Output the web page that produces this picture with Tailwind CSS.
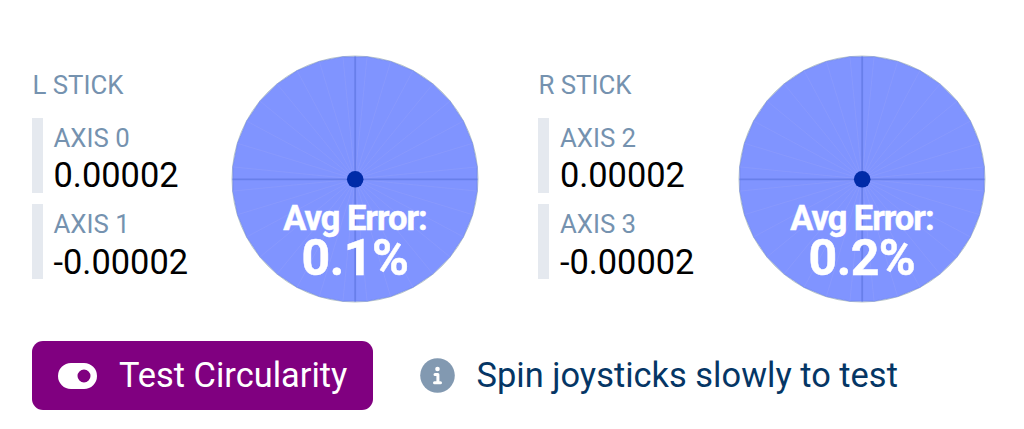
<!DOCTYPE html>
<html lang="en">
<head>
  <meta charset="UTF-8">
  <meta name="viewport" content="width=device-width, initial-scale=1.0">
  <title>Gamepad Tester</title>
  <script src="https://cdn.jsdelivr.net/npm/@tailwindcss/browser@4"></script>
</head>
<body class="bg-white text-black font-['Roboto',sans-serif] w-[1024px] h-[429px] overflow-hidden">
  <!-- Shared dial: 32 sided plot, sector seams, axes and stick position -->
  <svg class="hidden">
    <symbol id="dial" viewBox="-124 -124 248 248">
      <circle r="123" fill="#e6ecec" stroke="#b9c6ca" stroke-width="1"/>
      <path fill="#8094ff" stroke="#7188ef" stroke-width=".8" transform="scale(.997)" d="M122.4 12.1 117.7 35.7 108.5 58 95.1 78 78 95.1 58 108.5 35.7 117.7 12.1 122.4-12.1 122.4-35.7 117.7-58 108.5-78 95.1-95.1 78-108.5 58-117.7 35.7-122.4 12.1-122.4-12.1-117.7-35.7-108.5-58-95.1-78-78-95.1-58-108.5-35.7-117.7-12.1-122.4 12.1-122.4 35.7-117.7 58-108.5 78-95.1 95.1-78 108.5-58 117.7-35.7 122.4-12.1Z"/>
      <path stroke="#8a9bfd" stroke-width=".8" d="M122.4 12.1-122.4-12.1M117.7 35.7-117.7-35.7M108.5 58-108.5-58M95.1 78-95.1-78M78 95.1-78-95.1M58 108.5-58-108.5M35.7 117.7-35.7-117.7M12.1 122.4-12.1-122.4M-12.1 122.4 12.1-122.4M-35.7 117.7 35.7-117.7M-58 108.5 58-108.5M-78 95.1 78-95.1M-95.1 78 95.1-78M-108.5 58 108.5-58M-117.7 35.7 117.7-35.7M-122.4 12.1 122.4-12.1"/>
      <path stroke="#687fea" stroke-width="1.8" d="M-122.5 .3H122.5M.2-122.5V122.5"/>
      <circle cx=".2" cy=".3" r="8.3" fill="#002ba8"/>
    </symbol>
  </svg>

  <main class="pl-8 pt-[55px]">
    <div class="grid grid-cols-[506.4px_485px]">
      <!-- Left stick -->
      <section class="flex h-[248px]">
        <div class="w-[199px] pt-[15px]">
          <h2 class="pl-[0.5px] text-[25.8px] leading-[30px] text-[#7592af]">L STICK</h2>
          <div class="mt-[18px] h-[75px] border-l-[11px] border-[#e5e9ef] pl-[10.5px] pt-[5px]">
            <div class="text-[25.8px] leading-[30px] text-[#7592af]">AXIS 0</div>
            <div class="text-[34.4px] leading-[44px]">0.00002</div>
          </div>
          <div class="mt-[11px] h-[75px] border-l-[11px] border-[#e5e9ef] pl-[10.5px] pt-[5px]">
            <div class="text-[25.8px] leading-[30px] text-[#7592af]">AXIS 1</div>
            <div class="text-[34.4px] leading-[46px]">-0.00002</div>
          </div>
        </div>
        <div class="relative w-[248px] h-[248px]">
          <svg class="w-[248px] h-[248px]"><use href="#dial"/></svg>
          <div class="absolute inset-x-0 top-[144px] text-center font-bold text-white">
            <div class="text-[34.4px] leading-[38px] tracking-[-1px] [-webkit-text-stroke:0.5px_white]">Avg Error:</div>
            <div class="text-[50px] leading-[42px] tracking-[-0.5px] [-webkit-text-stroke:0.5px_white]">0.1%</div>
          </div>
        </div>
      </section>

      <!-- Right stick -->
      <section class="flex h-[248px]">
        <div class="w-[199.5px] pt-[15px]">
          <h2 class="text-[25.8px] leading-[30px] text-[#7592af]">R STICK</h2>
          <div class="mt-[18px] h-[75px] border-l-[11px] border-[#e5e9ef] pl-[10.5px] pt-[5px]">
            <div class="text-[25.8px] leading-[30px] text-[#7592af]">AXIS 2</div>
            <div class="text-[34.4px] leading-[44px]">0.00002</div>
          </div>
          <div class="mt-[11px] h-[75px] border-l-[11px] border-[#e5e9ef] pl-[10.5px] pt-[5px]">
            <div class="text-[25.8px] leading-[30px] text-[#7592af]">AXIS 3</div>
            <div class="text-[34.4px] leading-[46px]">-0.00002</div>
          </div>
        </div>
        <div class="relative w-[248px] h-[248px]">
          <svg class="w-[248px] h-[248px]"><use href="#dial"/></svg>
          <div class="absolute inset-x-0 top-[144px] text-center font-bold text-white">
            <div class="text-[34.4px] leading-[38px] tracking-[-1px] [-webkit-text-stroke:0.5px_white]">Avg Error:</div>
            <div class="text-[50px] leading-[42px] tracking-[-0.5px] [-webkit-text-stroke:0.5px_white]">0.2%</div>
          </div>
        </div>
      </section>
    </div>

    <div class="mt-[38px] flex items-center">
      <button class="flex h-[69px] w-[341px] items-center rounded-[11px] bg-[#800080] pl-[26px] text-[34.4px] text-white whitespace-nowrap">
        <svg class="mr-[22px] h-[26px] w-[39px] shrink-0" viewBox="0 0 39 26">
          <path fill="#fff" fill-rule="evenodd" d="M13 0H26A13 13 0 0 1 26 26H13A13 13 0 0 1 13 0ZM26 6.5A6.5 6.5 0 0 0 26 19.5A6.5 6.5 0 0 0 26 6.5Z"/>
        </svg>
        <span>Test Circularity</span>
      </button>
      <svg class="ml-[47px] h-[35px] w-[35px]" viewBox="0 0 35 35">
        <circle cx="17.5" cy="17.5" r="17.3" fill="#8299b1"/>
        <circle cx="17.5" cy="11" r="2.3" fill="#fff"/>
        <path fill="none" stroke="#fff" stroke-width="3" stroke-linecap="round" stroke-linejoin="round" d="M15 16.5H17.9V24.5M14.5 24.7H20.5"/>
      </svg>
      <p class="ml-[21.5px] text-[34.4px] tracking-[0.02px] text-[#053665]">Spin joysticks slowly to test</p>
    </div>
  </main>
</body>
</html>
